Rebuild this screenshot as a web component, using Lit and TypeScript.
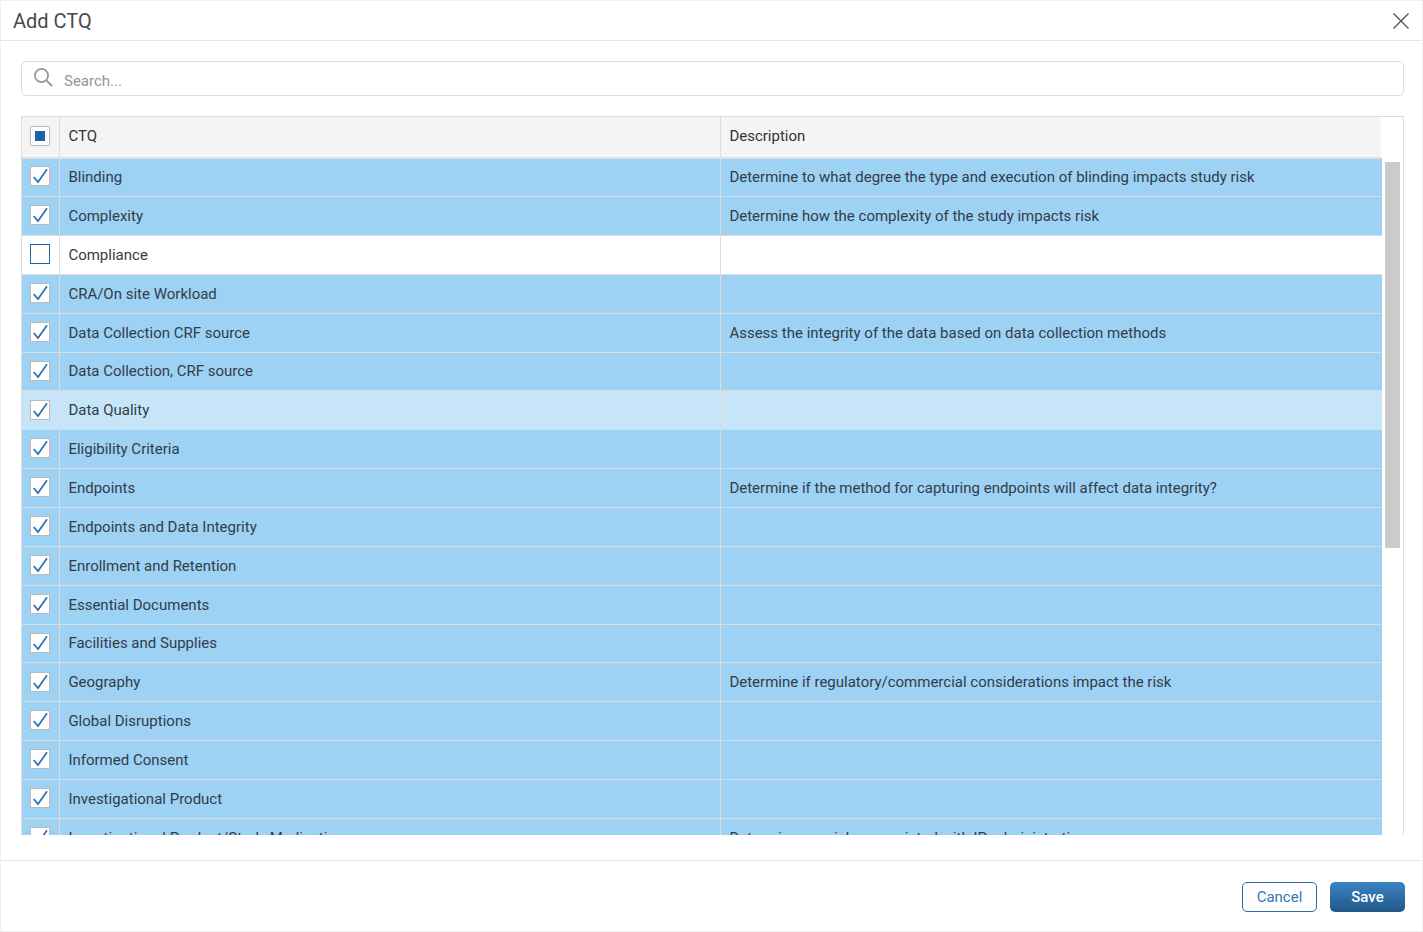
import { LitElement, html, css, svg } from "lit";
import { customElement } from "lit/decorators.js";

interface Row { name: string; desc?: string; off?: boolean; hover?: boolean }

const ROWS: Row[] = [
  { name: "Blinding", desc: "Determine to what degree the type and execution of blinding impacts study risk" },
  { name: "Complexity", desc: "Determine how the complexity of the study impacts risk" },
  { name: "Compliance", off: true },
  { name: "CRA/On site Workload" },
  { name: "Data Collection CRF source", desc: "Assess the integrity of the data based on data collection methods" },
  { name: "Data Collection, CRF source" },
  { name: "Data Quality", hover: true },
  { name: "Eligibility Criteria" },
  { name: "Endpoints", desc: "Determine if the method for capturing endpoints will affect data integrity?" },
  { name: "Endpoints and Data Integrity" },
  { name: "Enrollment and Retention" },
  { name: "Essential Documents" },
  { name: "Facilities and Supplies" },
  { name: "Geography", desc: "Determine if regulatory/commercial considerations impact the risk" },
  { name: "Global Disruptions" },
  { name: "Informed Consent" },
  { name: "Investigational Product" },
  { name: "Investigational Product/Study Medication", desc: "Determine any risks associated with IP administration" },
];

const check = svg`<svg class="tick" viewBox="0 0 20 20" width="20" height="20"><path d="M3.7 11 L8 16 L17 3.2" fill="none" stroke="#2a6fb0" stroke-width="1.7"/></svg>`;

@customElement("app-root")
export class AppRoot extends LitElement {
  static styles = css`
    :host {
      display: flex;
      flex-direction: column;
      width: 1423px;
      height: 932px;
      box-sizing: border-box;
      background: #fff;
      font-family: Roboto, "Liberation Sans", sans-serif;
      color: #333c48;
      font-size: 15px;
      overflow: hidden;
      border: 1px solid #f0f0f0;
    }
    .head {
      flex: none;
      height: 40px;
      box-sizing: border-box;
      display: flex;
      align-items: center;
      justify-content: space-between;
      padding: 0 12px;
      border-bottom: 1px solid #e6e6e6;
    }
    .title { font-size: 20px; color: #4a4a4a; }
    .close { display: block; }
    .body {
      flex: none;
      box-sizing: border-box;
      padding: 20px 18px 0 20px;
      display: flex;
      flex-direction: column;
      gap: 20px;
    }
    .search {
      flex: none;
      height: 35px;
      box-sizing: border-box;
      border: 1px solid #dcdcdc;
      border-radius: 5px;
      display: flex;
      align-items: center;
      gap: 11px;
      padding: 0 0 0 11px;
      color: #969696;
    }
    .search svg { margin-top: -4px; }
    .search span { padding-top: 5px; }
    .grid {
      flex: none;
      height: 719px;
      box-sizing: border-box;
      border: 1px solid #dcdcdc;
      border-bottom: 0;
      overflow: hidden;
      position: relative;
    }
    .hrow {
      display: flex;
      height: 42px;
      box-sizing: border-box;
      width: 1359px;
      background: #f4f4f4;
      border-bottom: 2px solid #e2e2e2;
      color: #333;
      position: relative;
      z-index: 1;
    }
    .hrow .c0, .hrow .c1, .hrow .c2 { padding-bottom: 2px; }
    .rows { width: 1360px; margin-top: -0.75px; }
    .row {
      display: flex;
      height: 38.86px;
      box-sizing: border-box;
      border-bottom: 1px solid #dcdcdc;
      background: #9dd2f5;
    }
    .row.off { background: #fff; }
    .row.hover { background: #c6e5f9; border-bottom-color: #c6e5f9; }
    .c0 {
      flex: none;
      width: 38px;
      box-sizing: border-box;
      border-right: 1px solid #dcdcdc;
      padding: 0 2px 1.5px 0;
      display: flex;
      align-items: center;
      justify-content: center;
    }
    .c1 {
      flex: none;
      width: 661px;
      box-sizing: border-box;
      border-right: 1px solid #dcdcdc;
      padding: 0 0 0.1px 8.4px;
      display: flex;
      align-items: center;
      white-space: nowrap;
    }
    .c2 {
      flex: 1;
      padding: 0 0 0.1px 8.4px;
      display: flex;
      align-items: center;
      white-space: nowrap;
    }
    .box {
      width: 20px;
      height: 20px;
      box-sizing: border-box;
      border: 1px solid #b9b9b9;
      background: #fff;
      position: relative;
      display: block;
    }
    .box .tick { position: absolute; left: -1px; top: -1px; }
    .box.empty { border-color: #1f66a6; }
    .box.mixed { border-radius: 2px; display: flex; align-items: center; justify-content: center; }
    .box.mixed i { display: block; width: 10px; height: 10px; background: #1c64a4; }
    .sbar {
      position: absolute;
      left: 1363px;
      top: 45px;
      width: 15px;
      height: 386px;
      background: #cbcbcb;
      z-index: 1;
    }
    .foot {
      margin-top: 25px;
      flex: 1;
      box-sizing: border-box;
      border-top: 1px solid #e6e6e6;
      display: flex;
      justify-content: flex-end;
      align-items: flex-start;
      gap: 13px;
      padding: 21px 17px 0 0;
    }
    .btn {
      width: 75px;
      height: 30px;
      box-sizing: border-box;
      border-radius: 5px;
      display: flex;
      align-items: center;
      justify-content: center;
    }
    .cancel { border: 1px solid #2a6aa5; color: #3a74ad; background: #fff; }
    .save {
      background: linear-gradient(#3a84c3, #215788);
      color: #fff;
      font-weight: 500;
    }
  `;

  render() {
    return html`
      <div class="head">
        <span class="title">Add CTQ</span>
        <svg class="close" width="18" height="18" viewBox="0 0 18 18"><path d="M1.5 1.5 L16.5 16.5 M16.5 1.5 L1.5 16.5" stroke="#555" stroke-width="1.4" fill="none"/></svg>
      </div>
      <div class="body">
        <div class="search">
          <svg width="20" height="20" viewBox="0 0 20 20"><circle cx="8.5" cy="8.5" r="6.6" fill="none" stroke="#999" stroke-width="1.8"/><path d="M13.4 13.4 L19 19" stroke="#999" stroke-width="2" fill="none"/></svg>
          <span>Search...</span>
        </div>
        <div class="grid">
          <div class="hrow">
            <div class="c0"><span class="box mixed"><i></i></span></div>
            <div class="c1">CTQ</div>
            <div class="c2">Description</div>
          </div>
          <div class="rows">
            ${ROWS.map(
              (r) => html`<div class="row ${r.off ? "off" : ""} ${r.hover ? "hover" : ""}">
                <div class="c0">
                  ${r.off ? html`<span class="box empty"></span>` : html`<span class="box">${check}</span>`}
                </div>
                <div class="c1">${r.name}</div>
                <div class="c2">${r.desc ?? ""}</div>
              </div>`
            )}
          </div>
          <div class="sbar"></div>
        </div>
      </div>
      <div class="foot">
        <div class="btn cancel">Cancel</div>
        <div class="btn save">Save</div>
      </div>
    `;
  }
}
